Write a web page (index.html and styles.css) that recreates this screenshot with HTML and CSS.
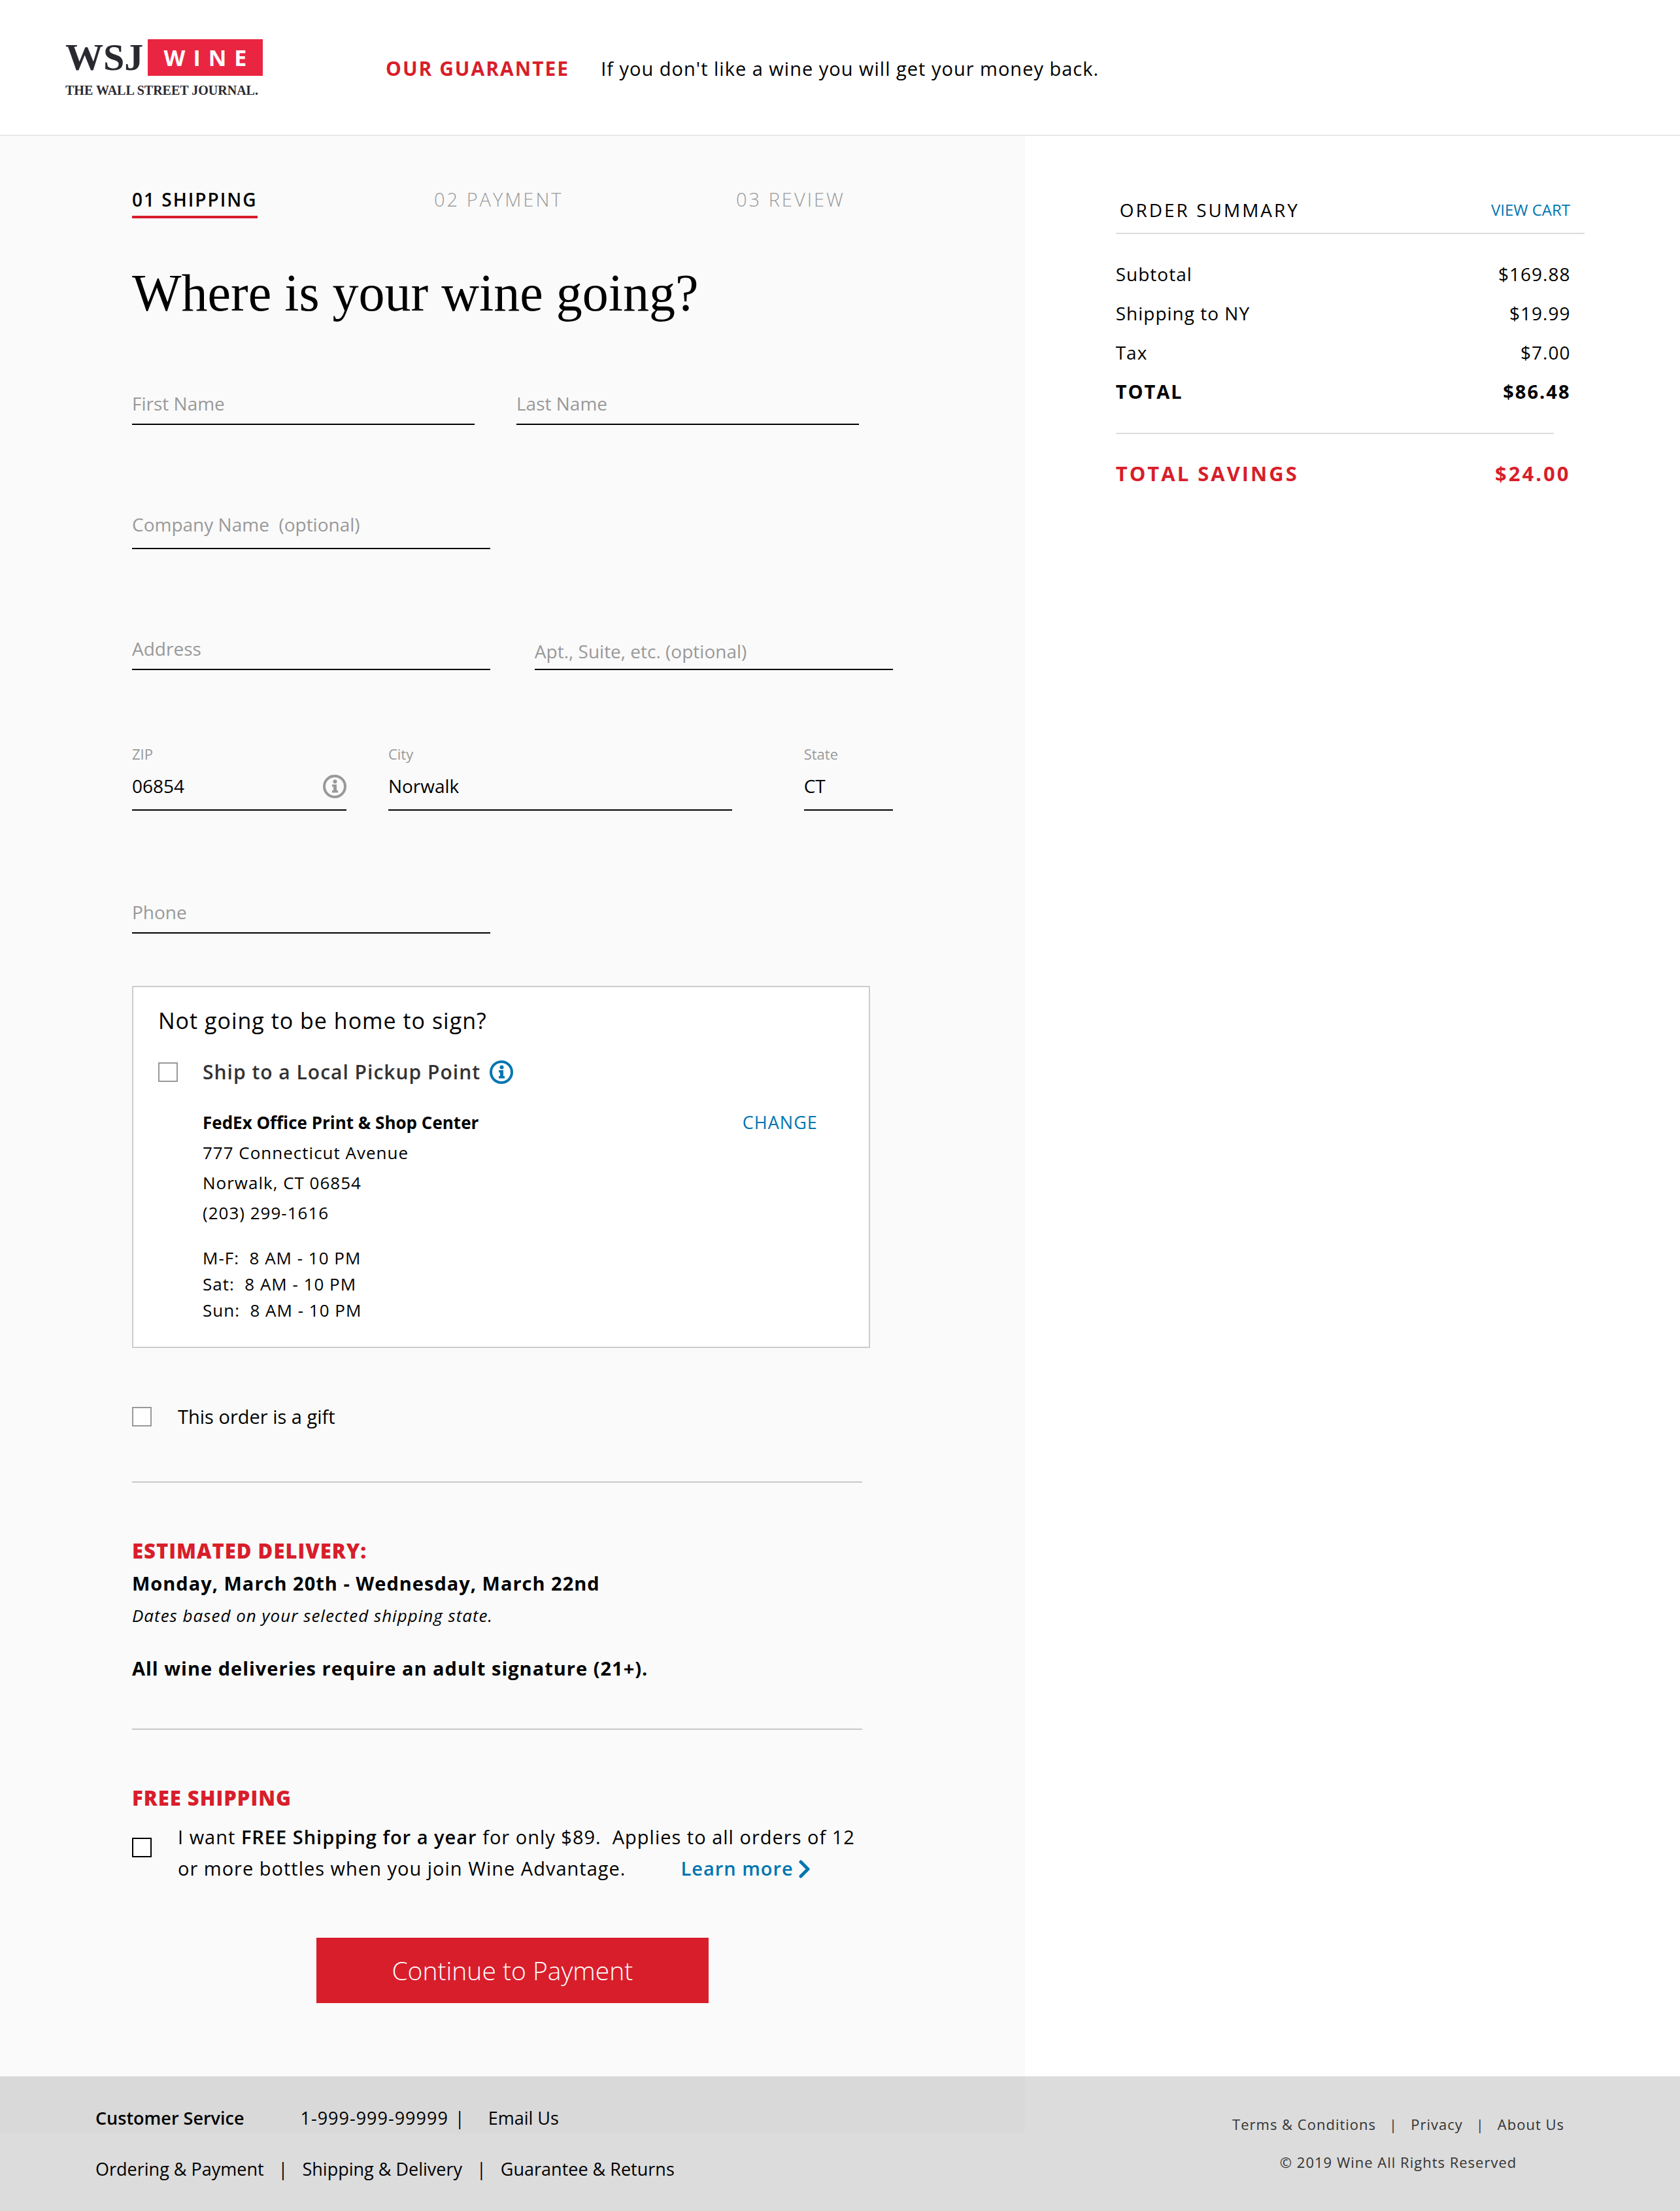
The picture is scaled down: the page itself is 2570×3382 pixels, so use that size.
FILE: index.html
```html
<!DOCTYPE html>
<html lang="en">
<head>
<meta charset="utf-8">
<meta name="viewport" content="width=device-width, initial-scale=1">
<title>WSJ Wine – Shipping</title>
<link rel="stylesheet" href="styles.css">
</head>
<body>
<header class="site-header">
  <a class="logo" href="#" aria-label="WSJ Wine, The Wall Street Journal">
    <span class="logo-top"><span class="logo-wsj">WSJ</span><span class="logo-wine">WINE</span></span>
    <span class="logo-name">THE WALL STREET JOURNAL.</span>
  </a>
  <p class="guarantee"><strong class="guarantee-title">OUR GUARANTEE</strong><span class="guarantee-text">If you don't like a wine you will get your money back.</span></p>
</header>

<main class="checkout">
  <section class="panel">
    <form class="form">
      <ol class="steps">
        <li><span class="step step-current">01 SHIPPING</span></li>
        <li><span class="step">02 PAYMENT</span></li>
        <li><span class="step">03 REVIEW</span></li>
      </ol>
      <h1 class="title">Where is your wine going?</h1>

      <div class="row row-names">
        <div class="field"><input class="input" type="text" placeholder="First Name" aria-label="First Name"></div>
        <div class="field"><input class="input" type="text" placeholder="Last Name" aria-label="Last Name"></div>
      </div>
      <div class="row row-half">
        <div class="field"><input class="input input-roomy" type="text" placeholder="Company Name&nbsp; (optional)" aria-label="Company Name (optional)"></div>
      </div>
      <div class="row row-half">
        <div class="field"><input class="input" type="text" placeholder="Address" aria-label="Address"></div>
        <div class="field"><input class="input input-tight" type="text" placeholder="Apt., Suite, etc. (optional)" aria-label="Apt., Suite, etc. (optional)"></div>
      </div>
      <div class="row row-place">
        <div class="field">
          <label class="label" for="zip">ZIP</label>
          <div class="with-icon">
            <input class="input input-roomy" id="zip" type="text" value="06854">
            <svg class="info info-field" viewBox="0 0 36 36" aria-hidden="true"><circle cx="18" cy="18" r="16" fill="none" stroke="currentColor" stroke-width="4"/><circle cx="18.500" cy="10.500" r="3" fill="currentColor"/><path d="M14 15h7v9h2v3.500h-9v-3.500h2v-5.500h-2z" fill="currentColor"/></svg>
          </div>
        </div>
        <div class="field field-city">
          <label class="label" for="city">City</label>
          <input class="input input-roomy" id="city" type="text" value="Norwalk">
        </div>
        <div class="field">
          <label class="label" for="state">State</label>
          <input class="input input-roomy" id="state" type="text" value="CT">
        </div>
      </div>
      <div class="row row-half row-phone">
        <div class="field"><input class="input" type="tel" placeholder="Phone" aria-label="Phone"></div>
      </div>

      <section class="pickup">
        <h2 class="pickup-title">Not going to be home to sign?</h2>
        <div class="pickup-option">
          <input class="check" type="checkbox" id="pickup">
          <label class="pickup-label" for="pickup">Ship to a Local Pickup Point</label>
          <svg class="info" viewBox="0 0 36 36" aria-hidden="true"><circle cx="18" cy="18" r="16" fill="none" stroke="currentColor" stroke-width="4"/><circle cx="18.500" cy="10.500" r="3" fill="currentColor"/><path d="M14 15h7v9h2v3.500h-9v-3.500h2v-5.500h-2z" fill="currentColor"/></svg>
        </div>
        <div class="pickup-details">
          <address class="pickup-address"><strong class="pickup-name">FedEx Office Print &amp; Shop Center</strong><br>777 Connecticut Avenue<br>Norwalk, CT 06854<br>(203) 299-1616</address>
          <a class="change" href="#">CHANGE</a>
        </div>
        <p class="hours">M-F:&nbsp; 8 AM - 10 PM<br>Sat:&nbsp; 8 AM - 10 PM<br>Sun:&nbsp; 8 AM - 10 PM</p>
      </section>

      <div class="gift">
        <input class="check" type="checkbox" id="gift">
        <label class="gift-label" for="gift">This order is a gift</label>
      </div>

      <section class="section">
        <h2 class="section-title">ESTIMATED DELIVERY:</h2>
        <p class="strong-line">Monday, March 20th - Wednesday, March 22nd</p>
        <p class="note">Dates based on your selected shipping state.</p>
        <p class="strong-line signature">All wine deliveries require an adult signature (21+).</p>
      </section>

      <section class="section">
        <h2 class="section-title">FREE SHIPPING</h2>
        <div class="free">
          <input class="check check-dark" type="checkbox" id="free">
          <p class="free-text"><label for="free">I want <strong>FREE Shipping for a year</strong> for only $89.&nbsp; Applies to all orders of 12<br>or more bottles when you join Wine Advantage.</label><a class="learn" href="#">Learn more<svg class="chevron" viewBox="0 0 18 28" aria-hidden="true"><path d="M3 3l11 11L3 25" fill="none" stroke="currentColor" stroke-width="5" stroke-linecap="round" stroke-linejoin="round"/></svg></a></p>
        </div>
      </section>

      <button class="submit" type="submit">Continue to Payment</button>
    </form>
  </section>

  <aside class="summary">
    <div class="summary-head">
      <h2 class="summary-title">ORDER SUMMARY</h2>
      <a class="view-cart" href="#">VIEW CART</a>
    </div>
    <table class="totals">
      <tbody>
        <tr><th scope="row">Subtotal</th><td>$169.88</td></tr>
        <tr><th scope="row">Shipping to NY</th><td>$19.99</td></tr>
        <tr><th scope="row">Tax</th><td>$7.00</td></tr>
        <tr class="total"><th scope="row">TOTAL</th><td>$86.48</td></tr>
      </tbody>
    </table>
    <hr class="summary-rule">
    <p class="savings"><span>TOTAL SAVINGS</span><span>$24.00</span></p>
  </aside>
</main>

<footer class="site-footer">
  <div class="service">
    <strong class="service-title">Customer Service</strong>
    <div class="service-contact"><span class="service-phone">1-999-999-99999</span><span class="service-bar">|</span><a href="#">Email Us</a></div>
    <nav class="service-links"><a href="#">Ordering &amp; Payment</a><span>|</span><a href="#">Shipping &amp; Delivery</a><span>|</span><a href="#">Guarantee &amp; Returns</a></nav>
  </div>
  <div class="legal">
    <nav class="legal-links"><a href="#">Terms &amp; Conditions</a><span>|</span><a href="#">Privacy</a><span>|</span><a href="#">About Us</a></nav>
    <p class="copyright">© 2019 Wine All Rights Reserved</p>
  </div>
</footer>
</body>
</html>
```
FILE: styles.css
```css
* { box-sizing: border-box; }

body {
  margin: 0;
  background: #fff;
  color: #000;
  font-family: "Open Sans", sans-serif;
  font-size: 28px;
  line-height: 40px;
}

h1, h2, p, ol { margin: 0; padding: 0; font-weight: 400; }
a { color: inherit; text-decoration: none; }
strong { font-weight: 600; }

/* Header */
.site-header {
  display: flex;
  align-items: center;
  gap: 188px;
  height: 208px;
  padding: 4px 100px 0;
  border-bottom: 2px solid #e8e8e8;
}
.logo { display: flex; flex-direction: column; gap: 10px; width: 302px; color: #2a292f; font-family: "Liberation Serif", serif; }
.logo-top { display: flex; align-items: flex-end; justify-content: space-between; }
.logo-wsj { font-size: 58px; line-height: 56px; font-weight: 700; }
.logo-wine {
  width: 176px;
  padding-left: 12px;
  background: #ea2541;
  color: #fff;
  font-family: "Open Sans", sans-serif;
  font-size: 34px;
  font-weight: 700;
  line-height: 56px;
  letter-spacing: 12px;
  text-align: center;
}
.logo-name { font-size: 20px; line-height: 24px; font-weight: 700; white-space: nowrap; }
.guarantee { display: flex; gap: 48px; font-size: 29px; }
.guarantee-title { color: #d81e2b; font-size: 30px; font-weight: 700; letter-spacing: 2px; }
.guarantee-text { letter-spacing: 1px; }

/* Columns */
.checkout { display: flex; }
.panel { width: 61%; padding: 77px 202px 112px; background: #fafafa; }
.form { display: flex; flex-direction: column; }

/* Progress */
.steps { display: grid; grid-template-columns: repeat(3, 462px); list-style: none; }
.step { display: inline-block; color: #999; font-size: 29px; font-weight: 300; letter-spacing: 3px; }
.step-current { padding-bottom: 5px; border-bottom: 4px solid #d81e2b; color: #000; font-size: 28px; font-weight: 600; letter-spacing: 2px; }
.title { margin-top: 69px; font-family: "Liberation Serif", serif; font-size: 80px; line-height: 90px; }

/* Fields */
.row { display: grid; align-items: end; margin-top: 132px; }
.row-names { grid-template-columns: 1fr 1fr; gap: 64px; max-width: 1112px; margin-top: 104px; }
.row-half { grid-template-columns: 1fr 1fr; gap: 68px; }
.row-place { grid-template-columns: 328fr 572fr 136fr; gap: 64px; margin-top: 112px; }
.row-phone { margin-top: 135px; }
.field { min-width: 0; }
.field-city { margin-right: 46px; }
.label { display: block; margin-bottom: 13px; color: #999; font-size: 22px; line-height: 32px; }
.input {
  display: block;
  width: 100%;
  height: 53px;
  padding: 0 0 11px;
  border: 0;
  border-bottom: 2px solid #000;
  border-radius: 0;
  background: transparent;
  color: #000;
  font: inherit;
}
.input::placeholder { color: #999; opacity: 1; }
.input-roomy { height: 58px; padding-bottom: 16px; }
.input-tight { padding-bottom: 3px; }
.with-icon { display: flex; border-bottom: 2px solid #000; }
.with-icon .input { flex: 1; min-width: 0; height: 56px; border-bottom: 0; }
.info { flex: none; width: 36px; height: 36px; color: #0075b0; }
.info-field { margin-top: 3px; color: #999; }

/* Tick boxes */
.check {
  appearance: none;
  flex: none;
  width: 30px;
  height: 30px;
  margin: 0;
  border: 2px solid #999;
  background: #fff;
}
.check-dark { margin-top: 25px; border-color: #000; }

/* Pickup card */
.pickup { width: 97%; margin-top: 80px; padding: 27px 78px 36px 38px; border: 2px solid #ccc; background: #fff; }
.pickup-title { font-size: 34px; line-height: 48px; letter-spacing: 1px; }
.pickup-option { display: flex; align-items: center; margin-top: 35px; }
.pickup-label { margin: 0 14px 0 38px; color: #333; font-size: 30px; font-weight: 600; letter-spacing: 1px; }
.pickup-details { display: flex; justify-content: space-between; margin-top: 34px; padding-left: 68px; font-size: 26px; line-height: 46px; letter-spacing: 1px; }
.pickup-address { font-style: normal; }
.pickup-name { font-weight: 700; letter-spacing: 0; }
.change { color: #0075b0; font-size: 27px; }
.hours { margin-top: 26px; padding-left: 68px; font-size: 26px; letter-spacing: 1px; }

.gift { display: flex; align-items: center; gap: 40px; margin-top: 85px; }
.gift-label { font-size: 29px; }

/* Delivery and shipping offers */
.section { width: 96%; border-top: 2px solid #c8c8c8; margin-top: 79px; padding-top: 79px; }
.section + .section { margin-top: 67px; }
.section-title { color: #d81e2b; font-size: 31px; line-height: 50px; font-weight: 800; letter-spacing: 1px; }
.strong-line { font-size: 29px; line-height: 50px; font-weight: 700; letter-spacing: 1px; }
.note { font-size: 26px; line-height: 48px; font-style: italic; letter-spacing: 1px; }
.signature { margin-top: 32px; }
.free { display: flex; gap: 40px; margin-top: 11px; }
.free-text { line-height: 48px; font-size: 29px; letter-spacing: 1px; white-space: nowrap; }
.learn { margin-left: 84px; color: #0075b0; font-weight: 600; }
.chevron { width: 18px; height: 28px; margin-left: 8px; vertical-align: -4px; }
.submit {
  align-self: center;
  width: 600px;
  height: 100px;
  margin-top: 82px;
  border: 0;
  background: #d81e2b;
  color: #fff;
  font: inherit;
  font-size: 39px;
  font-weight: 300;
}

/* Order summary */
.summary { flex: 1; padding: 93px 146px 0 139px; }
.summary-head { display: flex; justify-content: space-between; padding: 0 22px 15px 6px; border-bottom: 2px solid #dcdcdc; }
.summary-title { font-size: 28px; letter-spacing: 3px; }
.view-cart { color: #0075b0; font-size: 24px; }
.totals { width: 97%; margin-top: 31px; border-collapse: collapse; letter-spacing: 1px; }
.totals th, .totals td { height: 60px; padding: 0; font-weight: 400; text-align: left; }
.totals td { text-align: right; }
.totals .total th, .totals .total td { font-size: 29px; font-weight: 700; letter-spacing: 2px; }
.summary-rule { width: 670px; margin: 33px 0 0; border: 0; border-top: 2px solid #dcdcdc; }
.savings { display: flex; justify-content: space-between; width: 97%; margin-top: 30px; color: #d81e2b; font-size: 31px; line-height: 60px; font-weight: 700; letter-spacing: 3px; }

/* Footer */
.site-footer {
  display: flex;
  justify-content: space-between;
  padding: 44px 177px 44px 146px;
  background: #dcdcdc linear-gradient(#d9d9d9, #d9d9d9) 0 0 / 61% 88px no-repeat;
  font-size: 27px;
}
.service { display: grid; grid-template-columns: auto auto 1fr; gap: 38px 0; }
.service-title { grid-column: 1; margin-right: 86px; }
.service-contact { display: flex; grid-column: 2 / 4; }
.service-phone { letter-spacing: 1px; }
.service-bar { margin: 0 36px 0 10px; }
.service-links { display: flex; grid-column: 1 / 4; gap: 22px; }
.legal { display: flex; flex-direction: column; align-items: center; gap: 18px; padding-top: 9px; color: #333; font-size: 22px; letter-spacing: 1px; }
.legal-links { display: flex; gap: 20px; }
```
